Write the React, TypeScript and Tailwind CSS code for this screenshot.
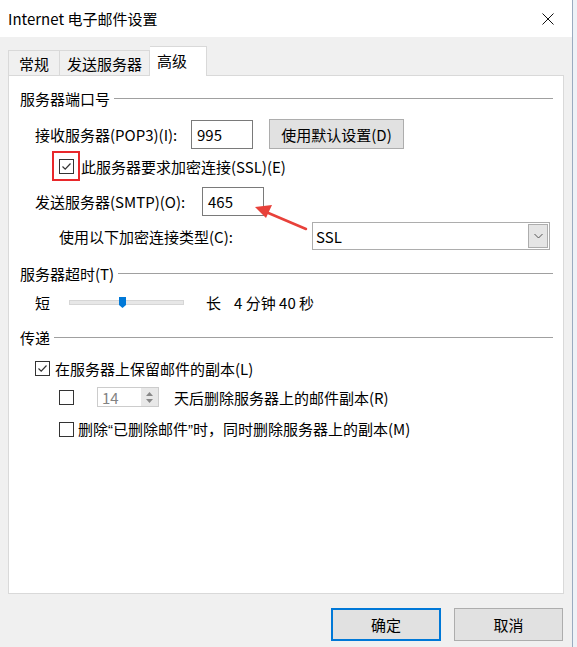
import React from 'react'

const FONT = "font-['Noto_Sans_CJK_SC','Noto_Sans',sans-serif]"

function CheckBox({ checked }: { checked?: boolean }) {
  return (
    <span className="flex h-[15px] w-[15px] shrink-0 items-center justify-center border border-[#333] bg-white">
      {checked && (
        <svg width="11" height="11" viewBox="0 0 11 11" fill="none" stroke="#333" strokeWidth="1.2">
          <polyline points="1.5,5.5 4.2,8.2 9.5,2.5" />
        </svg>
      )}
    </span>
  )
}

function GroupHeader({ label, className }: { label: string; className: string }) {
  return (
    <div className={`flex h-[20px] items-center pl-[11px] pr-[10px] ${className}`}>
      <span>{label}</span>
      <span className="ml-[4px] h-px flex-1 bg-[#a0a0a0]" />
    </div>
  )
}

export default function App() {
  return (
    <div className={`relative flex h-[647px] w-[577px] overflow-hidden bg-[#eef2f7] text-[15px] leading-none text-black ${FONT}`}>
      <div className="flex h-full w-[573px] flex-col border-r border-[#9aabc0] bg-[#f0f0f0]">
        {/* title bar */}
        <div className="flex h-[37px] shrink-0 items-center justify-between bg-white pl-[8px] pr-[18px]">
          <span className="text-[15px]">Internet 电子邮件设置</span>
          <svg width="12" height="12" viewBox="0 0 12 12" stroke="#111" strokeWidth="1">
            <line x1="0.5" y1="0.5" x2="11.5" y2="11.5" />
            <line x1="11.5" y1="0.5" x2="0.5" y2="11.5" />
          </svg>
        </div>

        <div className="flex flex-col px-[8px] pt-[9px]">
          {/* tabs */}
          <div className="flex h-[29px] items-end">
            <div className="flex h-[25px] w-[52px] items-center justify-center border border-b-0 border-[#d9d9d9] bg-[#f0f0f0]">常规</div>
            <div className="flex h-[25px] w-[90px] items-center justify-center border border-b-0 border-l-0 border-[#d9d9d9] bg-[#f0f0f0]">发送服务器</div>
            <div className="relative z-10 -mb-px flex h-[30px] w-[57px] items-center border border-b-0 border-l-0 border-[#d9d9d9] bg-white pb-[3px] pl-[7px]">高级</div>
          </div>

          {/* panel */}
          <div className="flex h-[519px] flex-col border border-[#d9d9d9] bg-white">
            <GroupHeader label="服务器端口号" className="mt-[12px]" />

            <div className="mt-[11px] flex h-[30px] items-center pl-[26px]">
              <span className="w-[156px]">接收服务器(POP3)(I):</span>
              <div className="flex h-[29px] w-[62px] items-start border border-[#7a7a7a] pl-[5px] pt-[6px]">995</div>
              <div className="ml-[16px] flex h-[30px] w-[135px] items-center justify-center border border-[#adadad] bg-[#e1e1e1]">使用默认设置(D)</div>
            </div>

            <div className="mt-[2px] flex h-[30px] items-center pl-[43px]">
              <div className="flex h-[30px] w-[28px] items-center justify-center border-2 border-[#e8282b]">
                <CheckBox checked />
              </div>
              <span className="ml-[1px]">此服务器要求加密连接(SSL)(E)</span>
            </div>

            <div className="mt-[6px] flex h-[29px] items-center pl-[26px]">
              <span className="w-[167px]">发送服务器(SMTP)(O):</span>
              <div className="flex h-[29px] w-[62px] items-start border border-[#7a7a7a] pl-[5px] pt-[6px]">465</div>
            </div>

            <div className="mt-[6px] flex h-[28px] items-center pl-[50px]">
              <span className="w-[253px]">使用以下加密连接类型(C):</span>
              <div className="flex h-[28px] w-[238px] items-center justify-between border border-[#adadad] bg-white pl-[3px] pr-px">
                <span>SSL</span>
                <div className="flex h-[24px] w-[20px] items-center justify-center border border-[#adadad] bg-[#e5e5e5]">
                  <svg width="9" height="6" viewBox="0 0 9 6" fill="none" stroke="#555" strokeWidth="1">
                    <polyline points="0.5,1 4.5,5 8.5,1" />
                  </svg>
                </div>
              </div>
            </div>

            <GroupHeader label="服务器超时(T)" className="mt-[13px]" />

            <div className="mt-[9px] flex h-[20px] items-center pl-[26px]">
              <span>短</span>
              <div className="relative ml-[19px] h-[5px] w-[115px] border border-[#d6d6d6] bg-[#e7e7e7]">
                <svg className="absolute left-[49px] top-[-4px]" width="7" height="11" viewBox="0 0 7 11">
                  <path d="M0 0 H7 V8 L3.5 11 L0 8 Z" fill="#0078d7" />
                </svg>
              </div>
              <span className="ml-[22px]">长</span>
              <span className="ml-[13px]">4 分钟 40 秒</span>
            </div>

            <GroupHeader label="传递" className="mt-[15px]" />

            <div className="mt-[11px] flex h-[20px] items-center pl-[26px]">
              <CheckBox checked />
              <span className="ml-[5px]">在服务器上保留邮件的副本(L)</span>
            </div>

            <div className="mt-[9px] flex h-[20px] items-center pl-[50px]">
              <CheckBox />
              <div className="ml-[23px] flex h-[20px] w-[62px] items-center border border-[#cccccc] text-[#838383]">
                <span className="flex-1 pl-[4px]">14</span>
                <div className="flex h-[18px] w-[17px] flex-col items-center justify-center gap-[3px] bg-[#e8e8e8]">
                  <svg width="7" height="4" viewBox="0 0 7 4"><path d="M0 4 L3.5 0 L7 4 Z" fill="#888" /></svg>
                  <svg width="7" height="4" viewBox="0 0 7 4"><path d="M0 0 L3.5 4 L7 0 Z" fill="#888" /></svg>
                </div>
              </div>
              <span className="ml-[15px]">天后删除服务器上的邮件副本(R)</span>
            </div>

            <div className="mt-[12px] flex h-[20px] items-center pl-[50px]">
              <CheckBox />
              <span className="ml-[4px]">
                删除<span className="font-['Liberation_Sans',sans-serif]">“</span>已删除邮件<span className="font-['Liberation_Sans',sans-serif]">”</span>时，同时删除服务器上的副本(M)
              </span>
            </div>
          </div>
        </div>

        {/* footer buttons */}
        <div className="mt-[14px] flex justify-end gap-[13px] pr-[9px]">
          <div className="flex h-[33px] w-[110px] items-center justify-center border-2 border-[#0078d7] bg-[#e1e1e1]">确定</div>
          <div className="flex h-[33px] w-[109px] items-center justify-center border border-[#adadad] bg-[#e1e1e1]">取消</div>
        </div>
      </div>

      {/* annotation arrow */}
      <svg className="absolute left-[250px] top-[200px]" width="62" height="34" viewBox="0 0 62 34">
        <line x1="56" y1="29" x2="16" y2="12" stroke="#e8413a" strokeWidth="2.5" strokeLinecap="round" />
        <path d="M5 7 L22 5 L16 18 Z" fill="#e8413a" />
      </svg>
    </div>
  )
}
